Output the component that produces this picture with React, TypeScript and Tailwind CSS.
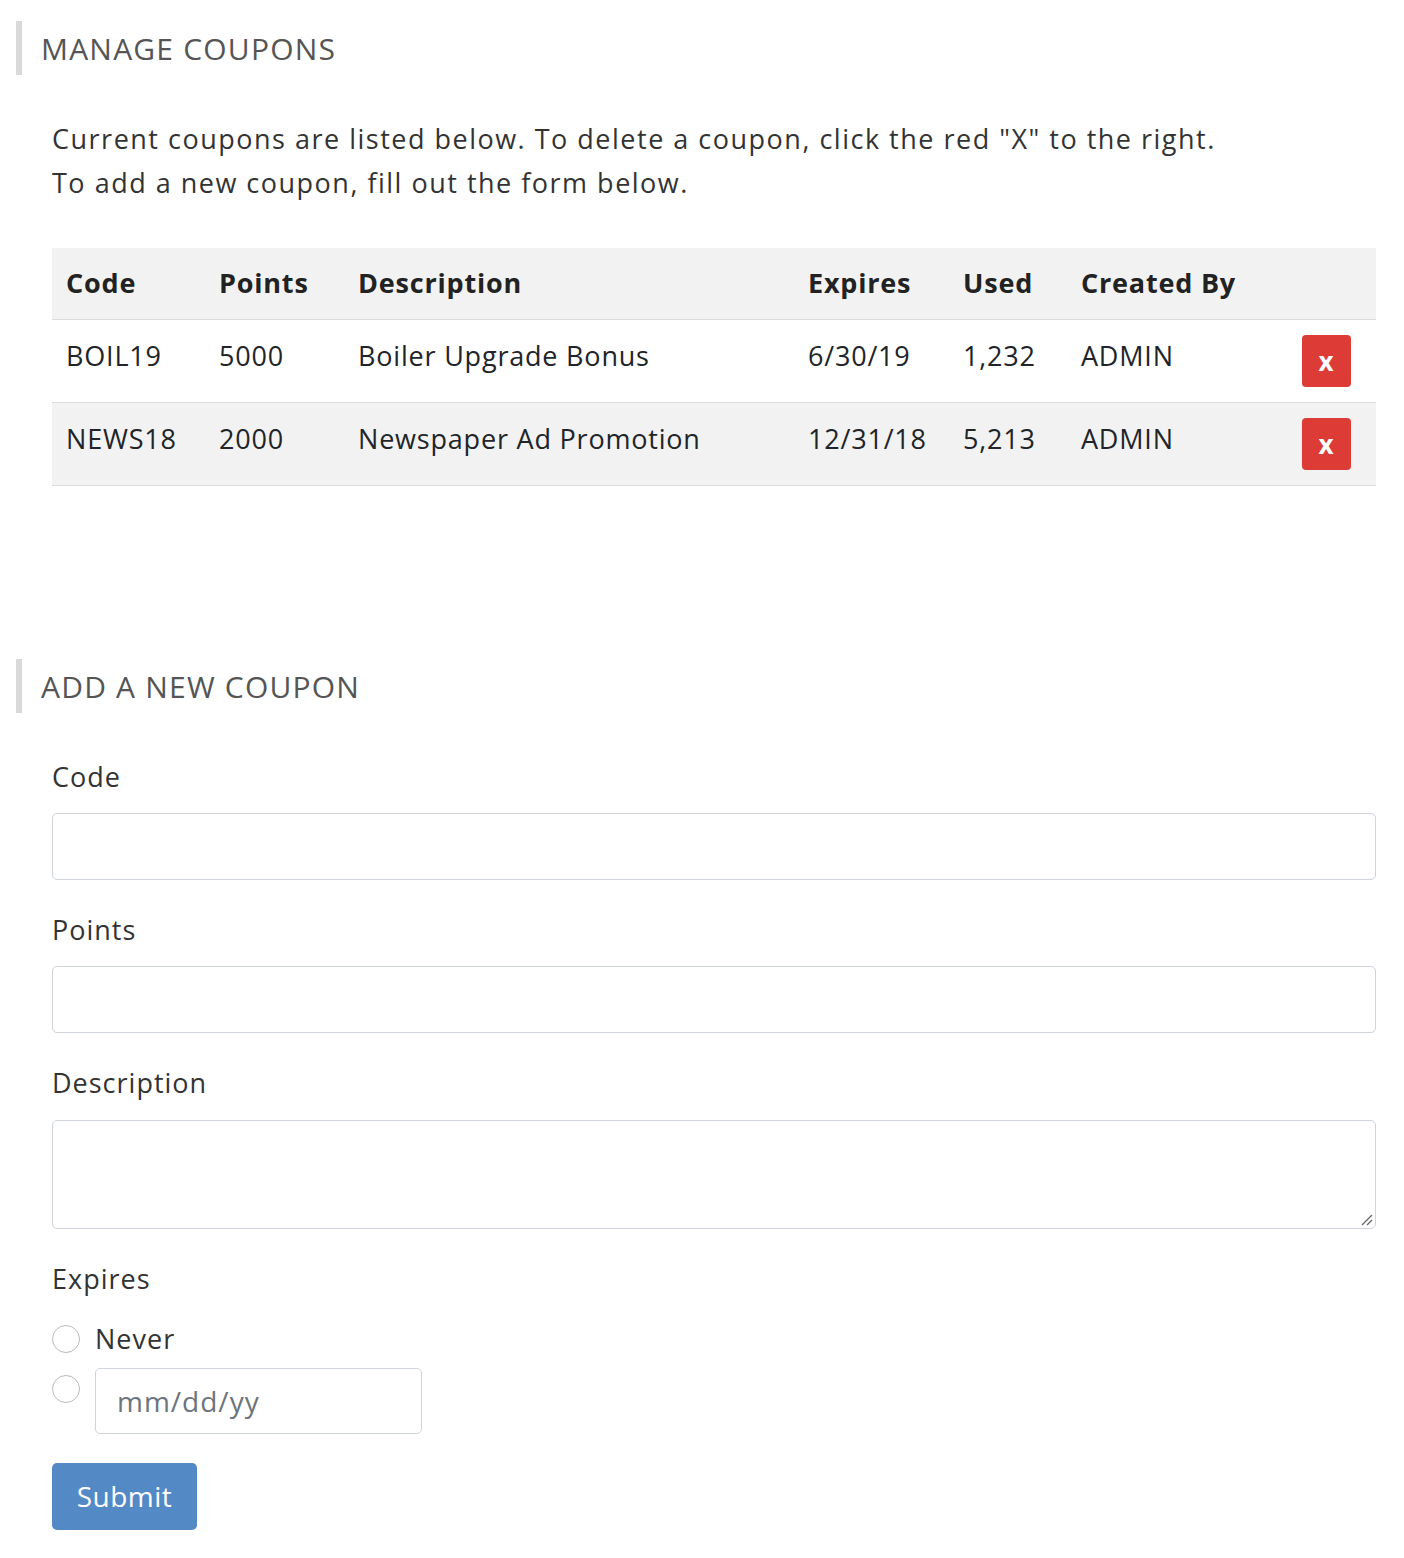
export default function App() {
  const cols = "grid grid-cols-[153px_139px_450px_155px_118px_1fr_74px] pl-[14px] items-center";
  const rows = [
    ["BOIL19", "5000", "Boiler Upgrade Bonus", "6/30/19", "1,232", "ADMIN"],
    ["NEWS18", "2000", "Newspaper Ad Promotion", "12/31/18", "5,213", "ADMIN"],
  ];
  const label = "text-[27px] text-[#333] h-[36px] leading-[36px] tracking-[1px]";
  const input = "w-full border border-[#ced4da] rounded-[5px] bg-white";
  return (
    <div className="w-[1404px] min-h-[1558px] bg-white text-[#212529]" style={{ fontFamily: '"Open Sans", sans-serif' }}>
      <div className="pt-[21px]">
        <div className="ml-[16px] border-l-[6px] border-[#d9d9d9] h-[54px] flex items-center pl-[19px] text-[30px] text-[#555] tracking-[1.2px]">MANAGE COUPONS</div>
      </div>
      <div className="pl-[52px] pr-[28px]">
        <p className="mt-[42px] text-[27px] leading-[44px] text-[#333] tracking-[1.5px]">
          Current coupons are listed below. To delete a coupon, click the red "X" to the right.<br />
          To add a new coupon, fill out the form below.
        </p>
        <div className="mt-[43px] text-[27px] tracking-[0.8px]">
          <div className={cols + " bg-[#f2f2f2] h-[72px] font-bold text-[#222] border-b border-[#ddd]"}>
            <div>Code</div><div>Points</div><div>Description</div><div>Expires</div><div>Used</div><div>Created By</div><div></div>
          </div>
          {rows.map((r, i) => (
            <div key={i} className={cols + " h-[83px] border-b border-[#ddd] " + (i === 1 ? "bg-[#f2f2f2]" : "bg-white")}>
              {r.map((c, j) => <div key={j} className="-mt-[10px]">{c}</div>)}
              <div className="flex">
                <div className="w-[49px] h-[52px] bg-[#dc3b36] rounded-[4px] flex items-center justify-center text-white font-bold text-[26px]">x</div>
              </div>
            </div>
          ))}
        </div>
      </div>
      <div className="mt-[173px]">
        <div className="ml-[16px] border-l-[6px] border-[#d9d9d9] h-[54px] flex items-center pl-[19px] text-[30px] text-[#555] tracking-[1.2px]">ADD A NEW COUPON</div>
      </div>
      <div className="pl-[52px] pr-[28px]">
        <div className={label + " mt-[46px]"}>Code</div>
        <div className={input + " h-[67px] mt-[18px]"} />
        <div className={label + " mt-[32px]"}>Points</div>
        <div className={input + " h-[67px] mt-[18px]"} />
        <div className={label + " mt-[32px]"}>Description</div>
        <div className={input + " h-[109px] mt-[19px] relative"}>
          <svg className="absolute right-[2px] bottom-[2px]" width="14" height="14" viewBox="0 0 14 14"><path d="M13 3L3 13M13 8L8 13" stroke="#666" strokeWidth="1.3" /></svg>
        </div>
        <div className={label + " mt-[32px]"}>Expires</div>
        <div className="flex items-center mt-[22px] gap-[15px]">
          <div className="w-[28px] h-[28px] rounded-full border border-[#bbb]" />
          <div className="text-[27px] text-[#333] tracking-[1px]">Never</div>
        </div>
        <div className="flex items-start mt-[8px] gap-[15px]">
          <div className="w-[28px] h-[28px] rounded-full border border-[#bbb] mt-[7px]" />
          <div className="w-[327px] h-[66px] border border-[#ced4da] rounded-[5px] flex items-center pl-[21px] text-[28px] text-[#6c757d] tracking-[1px]">mm/dd/yy</div>
        </div>
        <div className="mt-[29px] w-[145px] h-[67px] bg-[#5389c5] rounded-[5px] flex items-center justify-center text-white text-[28px] tracking-[0.5px]">Submit</div>
      </div>
    </div>
  );
}
